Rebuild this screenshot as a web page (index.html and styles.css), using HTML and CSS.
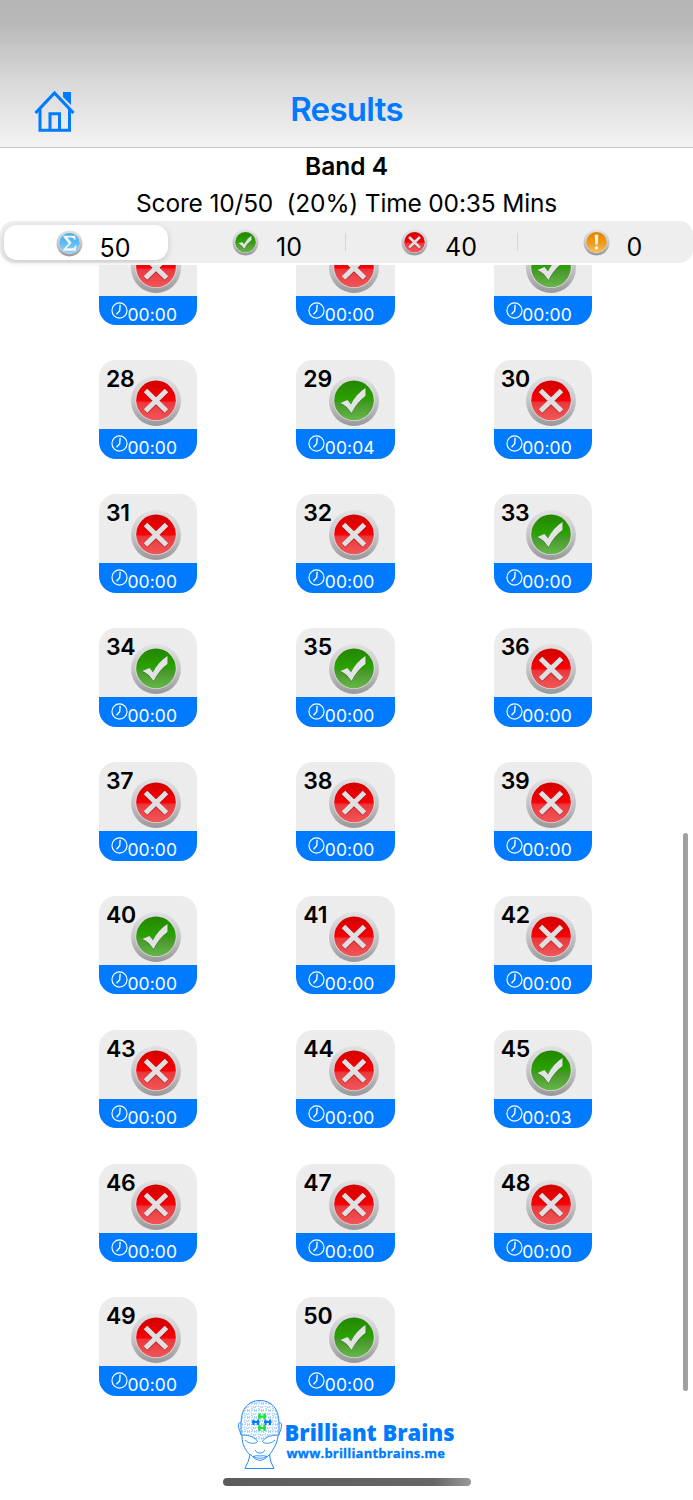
FILE: index.html
```html
<!DOCTYPE html>
<html lang="en">
<head>
  <meta charset="UTF-8" />
  <meta name="viewport" content="width=device-width, initial-scale=1.0"/>
  <title>Results</title>
  <link rel="stylesheet" href="styles.css">
</head>
<body>
  <!-- shared icons -->
  <svg class="defs" aria-hidden="true">
    <defs>
      <linearGradient id="rim" x1="0" y1="0" x2="0" y2="1">
        <stop offset="0" stop-color="#e2e2e4"/>
        <stop offset="0.5" stop-color="#c6c6c9"/>
        <stop offset="1" stop-color="#98989b"/>
      </linearGradient>
      <linearGradient id="red" x1="0" y1="0" x2="0" y2="1">
        <stop offset="0" stop-color="#d20000"/>
        <stop offset="0.5" stop-color="#f80006"/>
        <stop offset="0.56" stop-color="#ea3a3e"/>
        <stop offset="1" stop-color="#f25558"/>
      </linearGradient>
      <linearGradient id="green" x1="0" y1="0" x2="0" y2="1">
        <stop offset="0" stop-color="#238600"/>
        <stop offset="0.5" stop-color="#2ba303"/>
        <stop offset="0.56" stop-color="#46962a"/>
        <stop offset="1" stop-color="#66b74a"/>
      </linearGradient>
      <linearGradient id="sky" x1="0" y1="0" x2="0" y2="1">
        <stop offset="0" stop-color="#48aee8"/>
        <stop offset="0.5" stop-color="#56bdf5"/>
        <stop offset="0.56" stop-color="#71bdf0"/>
        <stop offset="1" stop-color="#91d4ff"/>
      </linearGradient>
      <linearGradient id="orange" x1="0" y1="0" x2="0" y2="1">
        <stop offset="0" stop-color="#e08300"/>
        <stop offset="0.5" stop-color="#f39a0a"/>
        <stop offset="0.56" stop-color="#e59b30"/>
        <stop offset="1" stop-color="#ffc04b"/>
      </linearGradient>
      <pattern id="puzzle" width="7" height="7" patternUnits="userSpaceOnUse">
        <path d="M0 0H2.5V1.5H4.5V0H7M0 0V2.5H1.5V4.5H0V7M3.5 3V6M5.5 3V6M3.5 4.5H5.5" fill="none" stroke="#7dbaff" stroke-width="0.6"/>
      </pattern>
    </defs>
    <symbol id="wrong" viewBox="0 0 52 52">
      <circle cx="26" cy="26" r="25" fill="url(#rim)"/>
      <circle cx="26" cy="25.4" r="20.7" fill="#dadadc"/>
      <circle cx="26" cy="25.4" r="19.8" fill="url(#red)"/>
      <path d="M15.5 15.5L36.5 36M36.5 15.5L15.5 36" stroke="#8d2020" stroke-opacity="0.6" stroke-width="5.6" transform="translate(0 .7)"/>
      <path d="M15.5 15.5L36.5 36M36.5 15.5L15.5 36" stroke="#e0e0e2" stroke-width="5"/>
    </symbol>
    <symbol id="right" viewBox="0 0 52 52">
      <circle cx="26" cy="26" r="25" fill="url(#rim)"/>
      <circle cx="26" cy="25.4" r="20.7" fill="#dadadc"/>
      <circle cx="26" cy="25.4" r="19.8" fill="url(#green)"/>
      <path d="M12.5 28L19.5 25L23 29.5Q28 19 37.5 13V21Q29 27 23.5 38Q18 30 12.5 28Z" fill="#1f5d0b" fill-opacity="0.6" transform="translate(0 .8)"/>
      <path d="M12.5 28L19.5 25L23 29.5Q28 19 37.5 13V21Q29 27 23.5 38Q18 30 12.5 28Z" fill="#e3e3e5"/>
    </symbol>
    <symbol id="total" viewBox="0 0 52 52">
      <circle cx="26" cy="26" r="25" fill="url(#rim)"/>
      <circle cx="26" cy="25.4" r="20.7" fill="#dadadc"/>
      <circle cx="26" cy="25.4" r="19.8" fill="url(#sky)"/>
      <path d="M14 11H37L38 19H35.5Q34 14.5 29 14.5H22L30 24.5L20 35H31Q36 35 37.5 30H40L37.5 40H14V37.5L24.5 26L14 13Z" fill="#f4f6f8"/>
    </symbol>
    <symbol id="skipped" viewBox="0 0 52 52">
      <circle cx="26" cy="26" r="25" fill="url(#rim)"/>
      <circle cx="26" cy="25.4" r="20.7" fill="#dadadc"/>
      <circle cx="26" cy="25.4" r="19.8" fill="url(#orange)"/>
      <path d="M22.5 11H29.5L28.5 30H23.5Z" fill="#f2f2f2"/>
      <circle cx="26" cy="36" r="3.3" fill="#f2f2f2"/>
    </symbol>
    <symbol id="clock" viewBox="0 0 16 16">
      <circle cx="8" cy="8" r="7.1" fill="none" stroke="#fff" stroke-width="1.1"/>
      <path d="M8.6 2.6L8.2 8.3L5.2 11.5" fill="none" stroke="#fff" stroke-width="1.3"/>
    </symbol>
  </svg>

  <header class="navbar">
    <svg class="home" viewBox="0 0 42 42">
      <path d="M29 2H37V15L29 7Z" fill="#007aff"/>
      <path d="M1.5 23L20.5 3L39.5 23" fill="none" stroke="#007aff" stroke-width="3.2"/>
      <path d="M6 19V40.2H35.5V19M16 40V23.7H25.5V40" fill="none" stroke="#007aff" stroke-width="3"/>
    </svg>
    <h1>Results</h1>
  </header>

  <section class="summary">
    <h2>Band 4</h2>
    <p class="score">Score 10/50&nbsp; (20%) Time 00:35 Mins</p>
  </section>

  <nav class="filters">
    <div class="filter active"><svg><use href="#total"/></svg><span>50</span></div>
    <div class="filter"><svg><use href="#right"/></svg><span>10</span></div>
    <div class="filter divided"><svg><use href="#wrong"/></svg><span>40</span></div>
    <div class="filter divided"><svg><use href="#skipped"/></svg><span>0</span></div>
  </nav>

  <main class="results">
    <div class="grid" id="grid"></div>
    <div class="scrollbar"></div>
  </main>

  <footer class="footer">
    <div class="brand">
      <svg class="head" viewBox="0 0 46 71">
        <path d="M4 24C4 9 12 1.5 23 1.5S42 9 42 24V36Q30 36 23 43Q16 36 4 36Z" fill="url(#puzzle)"/>
        <path d="M4 24C4 9 12 1.5 23 1.5S42 9 42 24C46 22 45 30 41 37C40 46 35 52 32.5 56Q33 63 37 69.5H8Q12 62 13 56C9 52 5 46 5 37C1 30 0 22 4 24V36M42 24V36" fill="none" stroke="#2288ff" stroke-width="1"/>
        <path d="M5 36Q17 36 21 43M41 36Q29 36 25 43M8 41Q13 46 20 43.5M38 41Q33 46 26 43.5M18 51Q20 55 23 54Q26 55 28 51M16 57.5Q20 56 23 57Q26 56 30 57.5Q23 61 16 57.5M13 55Q23 68 33 55" fill="none" stroke="#2288ff" stroke-width="0.9"/>
        <path d="M22.5 14.5V20.5M27.5 14.5V20.5M21 17.5H29M22.5 26V32M27.5 26V32M21 29H29" fill="none" stroke="#15e52f" stroke-width="2.2"/>
        <path d="M16.5 20.5V26M21 20.5V26M15 23H22.5M28.5 20.5V26M33 20.5V26M27 23H34.5" fill="none" stroke="#007aff" stroke-width="2"/>
      </svg>
      <div class="brand-text">
        <strong>Brilliant Brains</strong>
        <span>www.brilliantbrains.me</span>
      </div>
    </div>
    <div class="home-indicator"></div>
  </footer>

  <script>
    const grid = document.getElementById("grid");
    const first = 25;
    const last = 50;
    const correct = [27, 29, 33, 34, 35, 40, 45, 50];
    const times = { 29: "00:04", 45: "00:03" };

    for (let n = first; n <= last; n++) {
      const icon = correct.includes(n) ? "right" : "wrong";
      const tile = document.createElement("div");
      tile.className = "tile";
      tile.innerHTML = `
        <div class="tile-top">
          <span class="number">${n}</span>
          <svg class="badge"><use href="#${icon}"/></svg>
        </div>
        <div class="tile-time">
          <svg class="clock"><use href="#clock"/></svg>
          <span>${times[n] || "00:00"}</span>
        </div>`;
      grid.appendChild(tile);
    }
  </script>
</body>
</html>
```

FILE: styles.css
```css
* {
  box-sizing: border-box;
  font-family: Inter, "Liberation Sans", sans-serif;
}

body {
  margin: 0;
  height: 1500px;
  background: #fff;
  color: #000;
  display: flex;
  flex-direction: column;
  overflow: hidden;
}

h1, h2, p {
  margin: 0;
}

.defs {
  position: absolute;
  width: 0;
  height: 0;
}

.navbar {
  flex: none;
  height: 148px;
  padding: 70px 34px 0;
  display: grid;
  grid-template-columns: 42px 1fr 42px;
  align-items: center;
  background: linear-gradient(#b5b5b5 0, #b9b9b9 25px, #d8d8d8 80px, #f3f3f3 147px);
  border-bottom: 1px solid #c8c8c8;
}

.home {
  width: 42px;
  height: 42px;
  margin-top: 5px;
}

h1 {
  color: #007aff;
  font-size: 33px;
  font-weight: 600;
  line-height: 40px;
  text-align: center;
  letter-spacing: -0.7px;
}

.summary {
  flex: none;
  height: 73px;
  text-align: center;
}

h2 {
  font-size: 24.5px;
  font-weight: 600;
  line-height: 36px;
}

.score {
  font-size: 24.5px;
  line-height: 38px;
  letter-spacing: -0.17px;
}

.filters {
  flex: none;
  height: 42px;
  padding: 0 1px;
  display: grid;
  grid-template-columns: 172px 172px 172px 1fr;
  grid-template-rows: 42px;
  background: #eeeeee;
  border-radius: 14px;
}

.filter {
  display: flex;
  align-items: center;
  justify-content: center;
  gap: 17px;
  font-size: 25px;
  padding-left: 16px;
}

.filter svg {
  width: 27px;
  height: 27px;
  margin-top: 1px;
}

.filter span {
  line-height: 30px;
  margin-top: 10px;
}

.active {
  margin: 4px 5px 3px 3px;
  padding-left: 14px;
  background: #fff;
  border-radius: 13px;
  box-shadow: 0 2px 6px rgba(0, 0, 0, 0.16);
}

.divided {
  background: linear-gradient(#d5d5d8, #d5d5d8) left center / 1px 18px no-repeat;
}

.results {
  position: relative;
  flex: none;
  height: 1134px;
  margin-top: 2px;
  overflow: hidden;
}

.grid {
  display: grid;
  grid-template-columns: repeat(3, 98.6px);
  column-gap: 98.8px;
  row-gap: 35.26px;
  margin: -38.4px 0 0 98.9px;
}

.tile {
  height: 98.6px;
  border-radius: 17px;
  overflow: hidden;
  background: #ececec;
}

.tile-top {
  height: 69px;
  display: flex;
}

.number {
  width: 31.6px;
  padding: 5px 0 0 7px;
  font-size: 23px;
  font-weight: 600;
  line-height: 28px;
  letter-spacing: -0.2px;
}

/* the first row is scrolled under the filter bar */
.tile:nth-child(-n+3) .number {
  visibility: hidden;
}

.badge {
  flex: none;
  width: 52px;
  height: 52px;
  margin-top: 15px;
}

.tile-time {
  height: 29.6px;
  padding-left: 12px;
  display: flex;
  background: #007aff;
  color: #fff;
  font-size: 17.5px;
}

.clock {
  flex: none;
  width: 17px;
  height: 17px;
  margin-top: 6px;
}

.tile-time span {
  line-height: 22px;
  margin: 8px 0 0 -0.5px;
  letter-spacing: 0.1px;
}

.scrollbar {
  position: absolute;
  top: 568px;
  right: 5px;
  width: 5px;
  height: 558px;
  border-radius: 3px;
  background: #a0a0a0;
}

.footer {
  flex: 1;
  display: flex;
  flex-direction: column;
  align-items: center;
}

.brand {
  width: 220px;
  height: 79px;
  display: flex;
}

.head {
  flex: none;
  width: 46px;
  height: 71px;
}

.brand-text {
  display: flex;
  flex-direction: column;
  padding: 18px 0 0 2px;
  color: #007aff;
  white-space: nowrap;
}

.brand-text strong {
  font-family: "Open Sans", sans-serif;
  font-size: 22px;
  font-weight: 800;
  line-height: 31px;
}

.brand-text span {
  font-family: "Open Sans", sans-serif;
  font-size: 13px;
  font-weight: 700;
  line-height: 18px;
  margin-top: -4px;
  padding-left: 2px;
  letter-spacing: 0.2px;
  -webkit-text-stroke: 0.3px #007aff;
}

.home-indicator {
  width: 248px;
  height: 8px;
  border-radius: 4px;
  background: linear-gradient(90deg, #5c5c5c, #666 85%, #999);
}
```
